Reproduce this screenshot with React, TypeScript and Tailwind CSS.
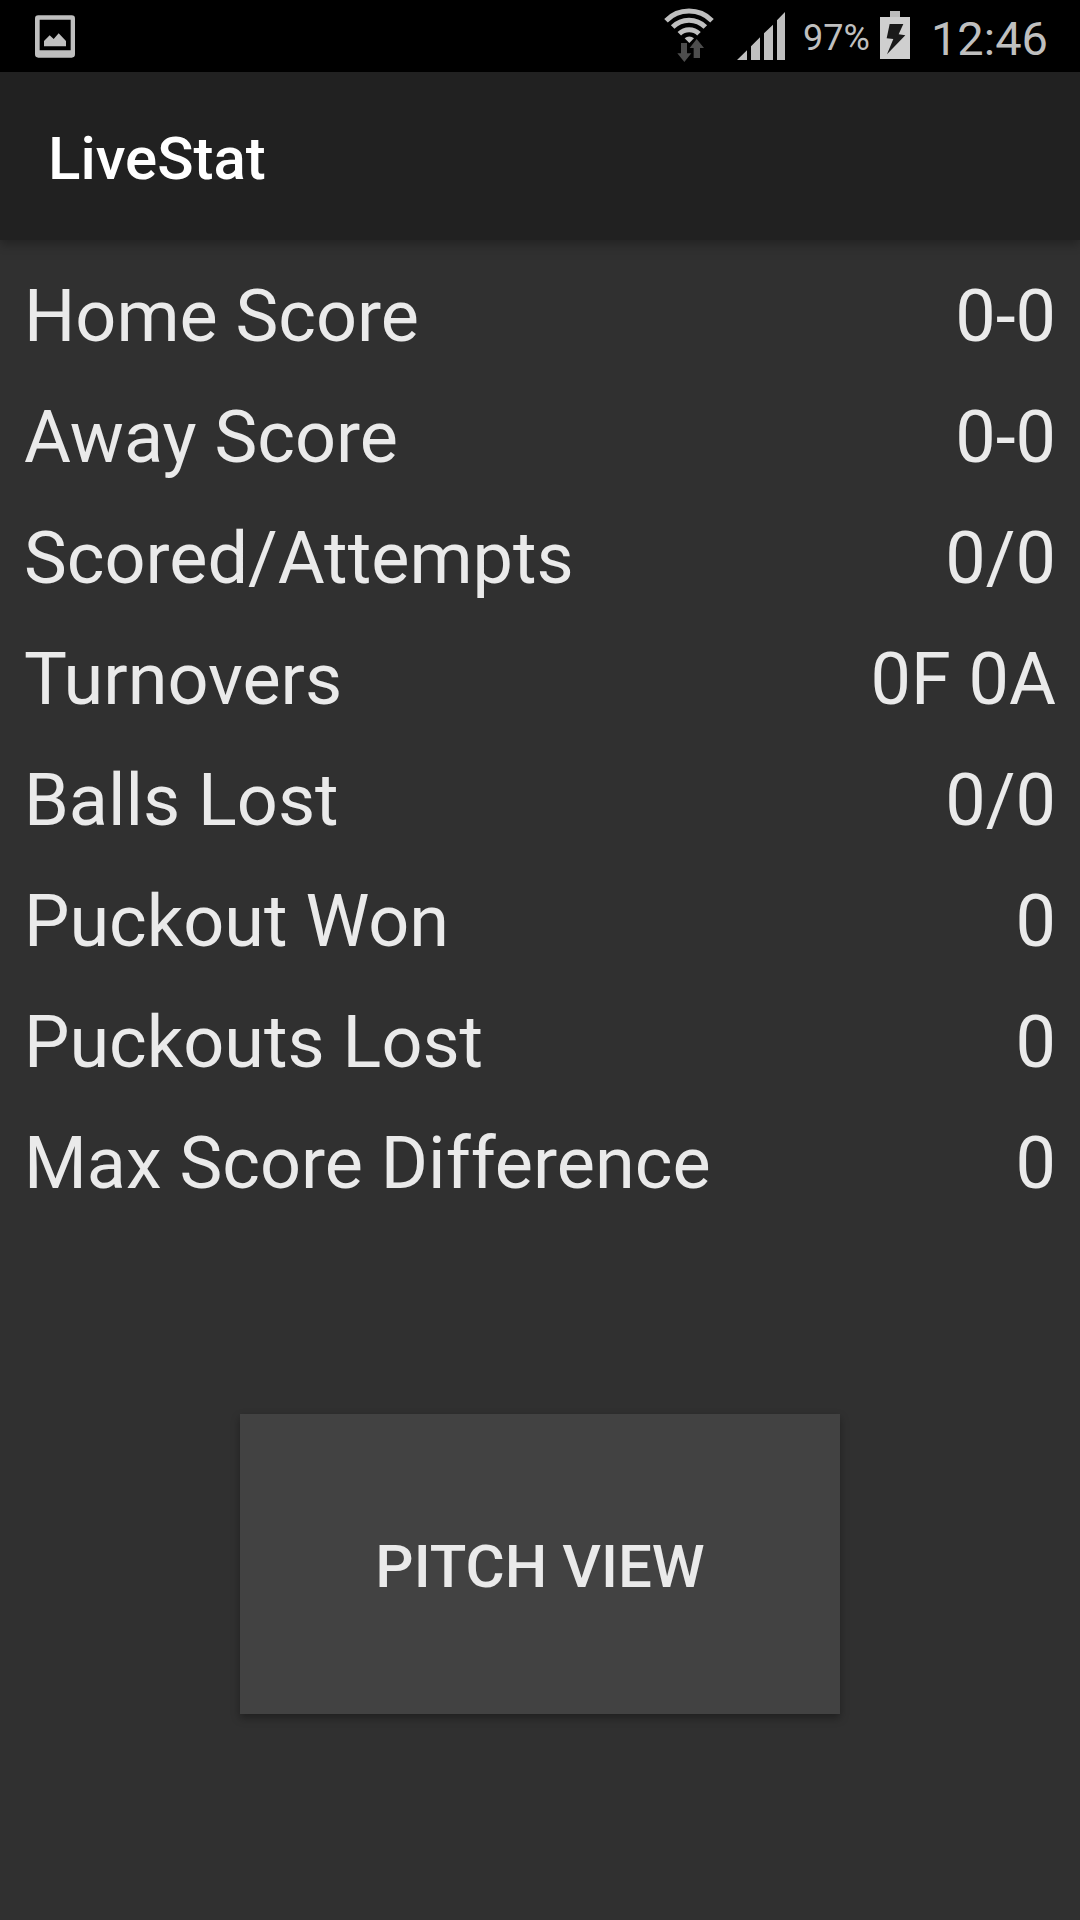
const stats = [
  { label: "Home Score", value: "0-0" },
  { label: "Away Score", value: "0-0" },
  { label: "Scored/Attempts", value: "0/0" },
  { label: "Turnovers", value: "0F 0A" },
  { label: "Balls Lost", value: "0/0" },
  { label: "Puckout Won", value: "0" },
  { label: "Puckouts Lost", value: "0" },
  { label: "Max Score Difference", value: "0" },
];

function PictureIcon() {
  return (
    <svg width="40" height="43" viewBox="105 43 120 129" fill="#bfbfbf" aria-hidden="true">
      <path
        fillRule="evenodd"
        d="M115 44h100a10 10 0 0 1 10 10v107a10 10 0 0 1-10 10H115a10 10 0 0 1-10-10V54a10 10 0 0 1 10-10zM119 57v92h93V57z"
      />
      <path d="M132 121l17-17 12 11 15-17 22 23v16h-66z" />
    </svg>
  );
}

function WifiIcon() {
  return (
    <svg width="52" height="56" viewBox="72 24 156 168" aria-hidden="true">
      <g fill="none" stroke="#bfbfbf" strokeWidth="15">
        <path d="M81 62A97 97 0 0 1 219 62" />
        <path d="M101 81A69 69 0 0 1 199 81" />
        <path d="M121 101A42 42 0 0 1 180 101" />
      </g>
      <path d="M137 115A21 21 0 0 1 165 115L151 129Z" fill="#bfbfbf" />
      <path
        d="M126 129h18v31h13l-21 26-21-26h11zM173 117l22 27h-12v30h-19v-30h-12z"
        fill="#4d4d4d"
      />
    </svg>
  );
}

function SignalIcon() {
  return (
    <svg width="48" height="48" viewBox="294 36 144 144" fill="#bfbfbf" aria-hidden="true">
      <path d="M294 180l30-29v29zM336 180v-41l27-27v68zM375 180v-80l27-26v106zM414 180V61l24-25v144z" />
    </svg>
  );
}

function BatteryIcon() {
  return (
    <svg width="30" height="52" viewBox="60 30 90 156" aria-hidden="true">
      <path d="M90 33h30v18H90z" fill="#bcbcbc" />
      <path d="M60 51h90v126H60z" fill="#cfcfcf" />
      <path d="M89 72h41l-14 31 20 3-55 57 19-46-20-2z" fill="#1a1a1a" />
    </svg>
  );
}

export default function App() {
  return (
    <div className="flex min-h-screen flex-col bg-[#303030] font-['Roboto',sans-serif] text-[#eaeaea]">
      <div className="flex h-[72px] items-center bg-black pr-8 pl-[35px] text-[#bfbfbf]">
        <PictureIcon />
        <div className="ml-auto flex items-center">
          <WifiIcon />
          <div className="ml-[22px]">
            <SignalIcon />
          </div>
          <span className="ml-[18px] pt-1 text-[36px] leading-none">97%</span>
          <div className="ml-[10px]">
            <BatteryIcon />
          </div>
          <span className="ml-[21px] pt-1 text-[47px] leading-none">12:46</span>
        </div>
      </div>

      <header className="flex h-[168px] items-center bg-[#212121] px-12 pt-1.5 shadow-[0_4px_10px_rgba(0,0,0,0.3)]">
        <h1 className="text-[60px] leading-none font-medium text-white">LiveStat</h1>
      </header>

      <main className="flex flex-col px-6 pt-4">
        <dl className="text-[72px] leading-[121px]">
          {stats.map((s) => (
            <div key={s.label} className="flex justify-between">
              <dt>{s.label}</dt>
              <dd>{s.value}</dd>
            </div>
          ))}
        </dl>
        <button
          type="button"
          className="mt-[190px] h-[300px] w-[600px] max-w-full self-center bg-[#424242] pt-1.5 text-[60px] font-medium shadow-[0_4px_8px_rgba(0,0,0,0.35)]"
        >
          PITCH VIEW
        </button>
      </main>
    </div>
  );
}
